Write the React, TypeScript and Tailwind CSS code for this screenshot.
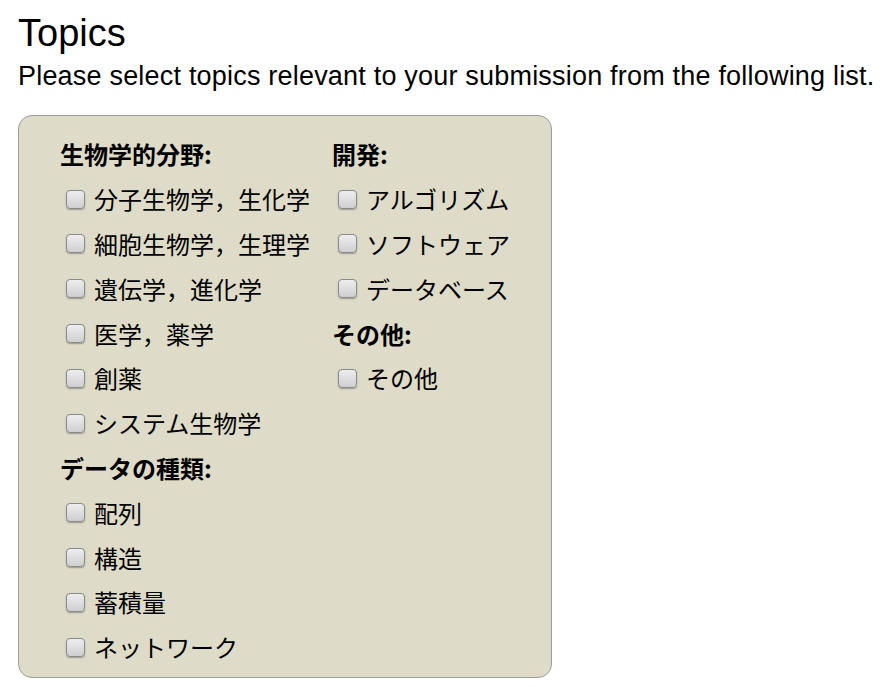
import React from "react";

const col1: { heading: string; items: string[] }[] = [
  {
    heading: "生物学的分野:",
    items: [
      "分子生物学，生化学",
      "細胞生物学，生理学",
      "遺伝学，進化学",
      "医学，薬学",
      "創薬",
      "システム生物学",
    ],
  },
  {
    heading: "データの種類:",
    items: ["配列", "構造", "蓄積量", "ネットワーク"],
  },
];

const col2: { heading: string; items: string[] }[] = [
  { heading: "開発:", items: ["アルゴリズム", "ソフトウェア", "データベース"] },
  { heading: "その他:", items: ["その他"] },
];

function Box() {
  return (
    <span className="inline-block w-[19px] h-[19px] shrink-0 rounded-[4px] border border-[#8a8a8a] bg-gradient-to-b from-[#eeeeee] to-[#cfcfcf] shadow-[0_1px_1.5px_rgba(0,0,0,0.3)]" />
  );
}

function Column({ groups, width }: { groups: { heading: string; items: string[] }[]; width: string }) {
  return (
    <div className={`flex flex-col ${width}`}>
      {groups.map((g) => (
        <React.Fragment key={g.heading}>
          <div className="h-[44.8px] flex items-center font-bold">{g.heading}</div>
          {g.items.map((it) => (
            <label key={it} className="h-[44.8px] flex items-center gap-[9px] pl-[6px]">
              <Box />
              <span>{it}</span>
            </label>
          ))}
        </React.Fragment>
      ))}
    </div>
  );
}

export default function App() {
  return (
    <div className="bg-white w-[886px] h-[687px] px-[18px] text-black font-['Liberation_Sans',Arial,sans-serif]">
      <h1 className="pt-[14px] text-[38px] leading-[38px]">Topics</h1>
      <p className="mt-[11px] text-[27px] leading-[27px] tracking-[0.2px] whitespace-nowrap">
        Please select topics relevant to your submission from the following list.
      </p>
      <div className="mt-[25px] w-[534px] h-[563px] rounded-[14px] border border-[#9c9c9c] bg-[#dedbc8] pl-[41px] pt-[16px] flex font-['Noto_Sans_CJK_JP','Noto_Sans_CJK_SC',sans-serif] text-[24px] leading-none">
        <Column groups={col1} width="w-[272px]" />
        <Column groups={col2} width="w-[210px]" />
      </div>
    </div>
  );
}
